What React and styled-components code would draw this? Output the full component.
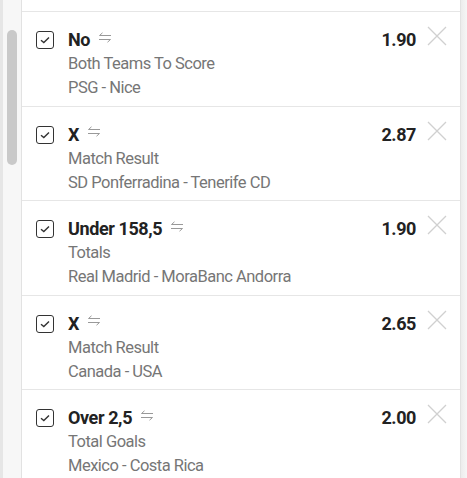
import React from "react";
import styled, { createGlobalStyle } from "styled-components";

const Global = createGlobalStyle`
  html, body {
    margin: 0;
    padding: 0;
    background: #f2f2f2;
    font-family: Roboto, "Liberation Sans", sans-serif;
  }
`;

const Page = styled.div`
  display: flex;
  width: 467px;
  height: 478px;
  overflow: hidden;
`;

const Track = styled.div`
  width: 18px;
  border-left: 3px solid #e6e6e6;
  background: #f7f7f7;
  display: flex;
  justify-content: center;
  padding-top: 30px;
`;

const Thumb = styled.div`
  width: 10px;
  height: 135px;
  border-radius: 5px;
  background: #c9c9c9;
`;

const Panel = styled.div`
  flex: 1;
  background: #fff;
  border-left: 1px solid #e2e2e2;
  border-right: 1px solid #e2e2e2;
  padding-top: 11px;
`;

const Edge = styled.div`
  width: 6px;
  background: linear-gradient(to right, #ececec, #f6f6f6);
`;

const Row = styled.div`
  display: flex;
  align-items: flex-start;
  height: 94.5px;
  border-top: 1px solid #e6e6e6;
  padding: 16px 13px 0 14px;
  box-sizing: border-box;
`;

const Check = styled.div`
  width: 18px;
  height: 18px;
  box-sizing: border-box;
  border: 1.5px solid #333;
  border-radius: 3px;
  display: flex;
  align-items: center;
  justify-content: center;
  margin-top: 3px;
  flex-shrink: 0;
`;

const Info = styled.div`
  flex: 1;
  margin-left: 14px;
  display: flex;
  flex-direction: column;
`;

const Title = styled.div`
  display: flex;
  align-items: center;
  font-size: 18px;
  font-weight: 700;
  color: #222;
  line-height: 24px;
  letter-spacing: -0.4px;
`;

const Swap = styled.svg`
  margin-left: 8px;
  margin-top: -6px;
`;

const Sub = styled.div`
  font-size: 16.5px;
  color: #767676;
  line-height: 24px;
  letter-spacing: -0.5px;
`;

const Odds = styled.div`
  font-size: 18px;
  font-weight: 700;
  color: #222;
  line-height: 24px;
  letter-spacing: -0.4px;
  margin-right: 11px;
`;

const Close = styled.svg`
  margin-top: -2px;
  flex-shrink: 0;
`;

const bets = [
  { pick: "No", market: "Both Teams To Score", match: "PSG - Nice", odds: "1.90" },
  { pick: "X", market: "Match Result", match: "SD Ponferradina - Tenerife CD", odds: "2.87" },
  { pick: "Under 158,5", market: "Totals", match: "Real Madrid - MoraBanc Andorra", odds: "1.90" },
  { pick: "X", market: "Match Result", match: "Canada - USA", odds: "2.65" },
  { pick: "Over 2,5", market: "Total Goals", match: "Mexico - Costa Rica", odds: "2.00" },
];

function Bet({ bet }) {
  return (
    <Row>
      <Check>
        <svg width="10" height="8" viewBox="0 0 10 8">
          <path d="M1 4.2 L3.8 6.6 L9 1.4" fill="none" stroke="#333" strokeWidth="1.4" />
        </svg>
      </Check>
      <Info>
        <Title>
          {bet.pick}
          <Swap width="14" height="11" viewBox="0 0 14 11">
            <path d="M13 3.5 H1.5 L4.5 0.8" fill="none" stroke="#999" strokeWidth="1" />
            <path d="M1 7.5 H12.5 L9.5 10.2" fill="none" stroke="#999" strokeWidth="1" />
          </Swap>
        </Title>
        <Sub>{bet.market}</Sub>
        <Sub>{bet.match}</Sub>
      </Info>
      <Odds>{bet.odds}</Odds>
      <Close width="20" height="20" viewBox="0 0 20 20">
        <path d="M1 1 L19 19 M19 1 L1 19" stroke="#d0d0d0" strokeWidth="1.3" />
      </Close>
    </Row>
  );
}

export default function App() {
  return (
    <Page>
      <Global />
      <Track>
        <Thumb />
      </Track>
      <Panel>
        {bets.map((b, i) => (
          <Bet key={i} bet={b} />
        ))}
      </Panel>
      <Edge />
    </Page>
  );
}
